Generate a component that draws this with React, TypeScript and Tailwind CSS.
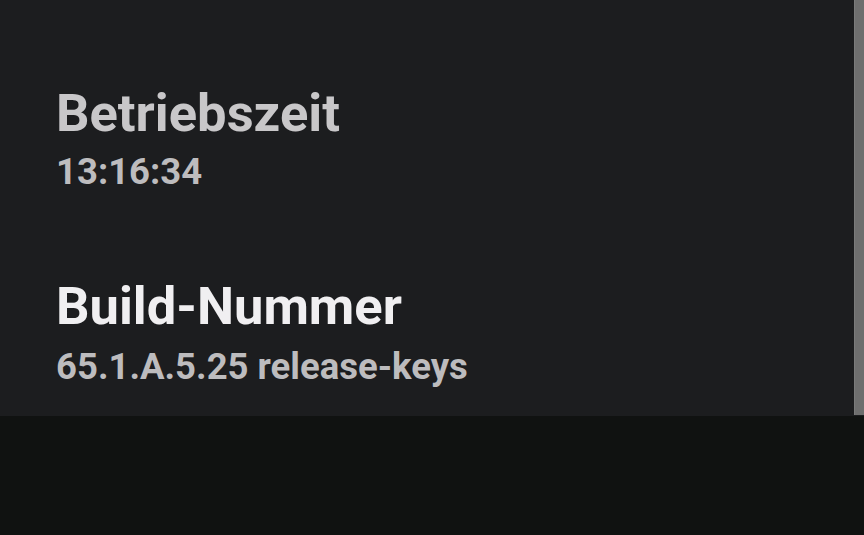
export default function App() {
  return (
    <div className="w-[864px] h-[535px] flex flex-col bg-[#101211] overflow-hidden" style={{ fontFamily: "Roboto, 'Liberation Sans', sans-serif" }}>
      <div className="h-[416px] flex bg-[#1c1d1f]">
        <div className="flex-1 flex flex-col pl-[56px] pt-[83px]">
          <div className="text-[52.5px] leading-[60px] font-bold text-[#c8c7c9]">Betriebszeit</div>
          <div className="mt-[7px] text-[36.5px] leading-[44px] font-bold text-[#bdbcbe]">13:16:34</div>
          <div className="mt-[82px] text-[52.5px] leading-[60px] font-bold text-[#f0eff1]">Build-Nummer</div>
          <div className="mt-[9px] text-[36.5px] leading-[44px] font-bold text-[#bdbcbe]">65.1.A.5.25 release-keys</div>
        </div>
        <div className="w-[10px] h-[415px] bg-[#6e6e6e] border-l border-[#7a7a7a]" />
      </div>
    </div>
  );
}
